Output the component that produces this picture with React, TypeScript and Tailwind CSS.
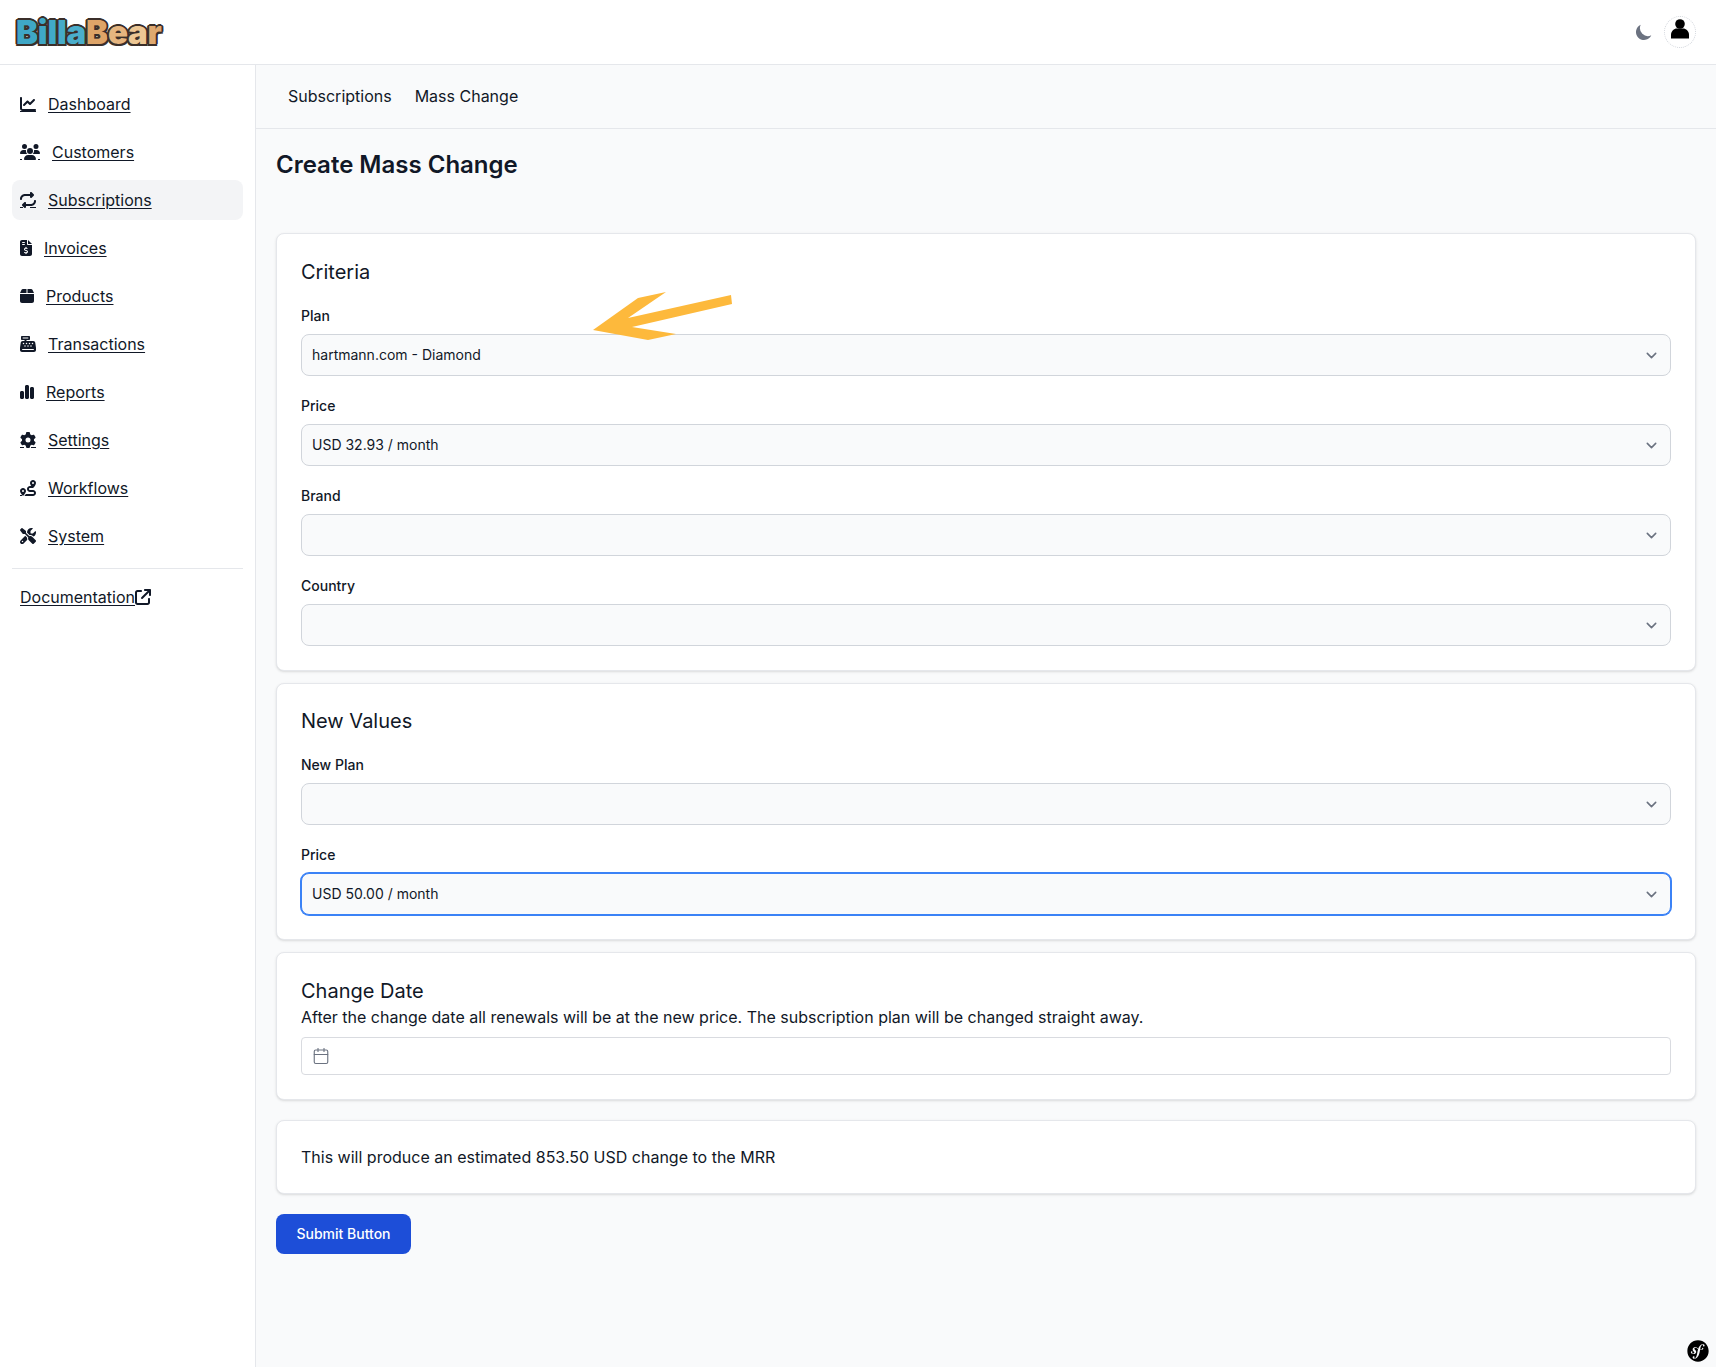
import React from 'react'
import { Calendar } from 'lucide-react'
import {
    FaArrowUpRightFromSquare,
    FaBox,
    FaCashRegister,
    FaChartLine,
    FaChartSimple,
    FaFileInvoiceDollar,
    FaGear,
    FaRepeat,
    FaRoute,
    FaScrewdriverWrench,
    FaSymfony,
    FaUsers,
} from 'react-icons/fa6'
import { HiMoon } from 'react-icons/hi'

// the line classes copy what the link underline leaves visible around each icon
const navItems = [
    { label: 'Dashboard', icon: FaChartLine, size: 'w-4', line: 'bg-[#111827]' },
    {
        label: 'Customers',
        icon: FaUsers,
        size: 'w-5',
        line: 'bg-[linear-gradient(90deg,#111827_0_2px,transparent_2px_18px,#111827_18px_20px)]',
    },
    {
        label: 'Subscriptions',
        icon: FaRepeat,
        size: 'w-4',
        active: true,
        line: 'bg-[linear-gradient(90deg,#111827_0_3px,transparent_3px_10px,#111827_10px_16px)]',
    },
    { label: 'Invoices', icon: FaFileInvoiceDollar, size: 'w-3' },
    { label: 'Products', icon: FaBox, size: 'w-3.5' },
    { label: 'Transactions', icon: FaCashRegister, size: 'w-4' },
    { label: 'Reports', icon: FaChartSimple, size: 'w-3.5' },
    {
        label: 'Settings',
        icon: FaGear,
        size: 'w-4',
        line: 'bg-[linear-gradient(90deg,#111827_0_4px,transparent_4px_11px,#111827_11px_16px)]',
    },
    {
        label: 'Workflows',
        icon: FaRoute,
        size: 'w-4',
        line: 'bg-[linear-gradient(90deg,#111827_0_2px,transparent_2px_16px)]',
    },
    { label: 'System', icon: FaScrewdriverWrench, size: 'w-4' },
]

function Logo() {
    const letters = [
        ['B', 'text-[#3fa7c6]'],
        ['i', 'text-[#3fa7c6]'],
        ['l', 'text-[#41a9c8]'],
        ['l', 'text-[#46abc8]'],
        ['a', 'text-[#4aaecb]'],
        ['B', 'text-[#dea468]'],
        ['e', 'text-[#e6b57f]'],
        ['a', 'text-[#edc794]'],
        ['r', 'text-[#dfa970]'],
    ]
    return (
        <div className="ml-[16px] font-['Inter'] text-[33px] leading-none font-black tracking-[-0.2px] [text-shadow:2px_0_0_#3b2f2a,-2px_0_0_#3b2f2a,0_2px_0_#3b2f2a,0_-2px_0_#3b2f2a,1.5px_1.5px_0_#3b2f2a,-1.5px_1.5px_0_#3b2f2a,1.5px_-1.5px_0_#3b2f2a,-1.5px_-1.5px_0_#3b2f2a]">
            {letters.map(([ch, color], i) => (
                <span key={i} className={color}>{ch}</span>
            ))}
        </div>
    )
}

function SelectField({ label, value, focused }: { label: string; value?: string; focused?: boolean }) {
    return (
        <div className="mt-5">
            <label className="block mb-2 text-sm font-medium text-[#111827]">{label}</label>
            <div className="relative">
                <select
                    defaultValue={value ?? ''}
                    className={`block w-full h-[42px] appearance-none rounded-lg border bg-[#f9fafb] p-2.5 pr-10 text-sm text-[#111827] outline-none ${
                        focused ? 'border-[#3b82f6] ring-1 ring-[#3b82f6]' : 'border-[#d1d5db]'
                    }`}
                >
                    <option value={value ?? ''}>{value ?? ''}</option>
                </select>
                <svg viewBox="0 0 20 20" fill="none" className="absolute right-[9px] top-[10.5px] w-[21px] h-[21px] pointer-events-none">
                    <path d="m6 8 4 4 4-4" stroke="#6B7280" strokeWidth="1.5" strokeLinecap="round" strokeLinejoin="round" />
                </svg>
            </div>
        </div>
    )
}

function Card({ className, children }: { className?: string; children: React.ReactNode }) {
    return <div className={`rounded-lg border border-[#e5e7eb] bg-white p-6 shadow-sm ${className ?? ''}`}>{children}</div>
}

export default function App() {
    return (
        <div className="relative flex flex-col h-screen overflow-hidden bg-[#f9fafb] font-['Inter',sans-serif] text-[#111827]">
            <header className="flex items-center justify-between h-[65px] shrink-0 border-b border-[#e5e7eb] bg-white">
                <Logo />
                <div className="flex items-center gap-[10px] mr-5">
                    <HiMoon className="w-5 h-5 text-[#6b7280]" />
                    <div className="flex items-center justify-center w-8 h-8 rounded-full border border-dotted border-[#d1d5db]">
                        <svg viewBox="0 0 20 20" className="w-5 h-5 shrink-0 -translate-y-[3px]">
                            <circle cx="10" cy="5" r="4.8" fill="#000" />
                            <path d="M1 19.5V16c0-4 3-6.5 6-6.5h6c3 0 6 2.5 6 6.5v3.5z" fill="#000" />
                        </svg>
                    </div>
                </div>
            </header>

            <div className="flex flex-1 min-h-0">
                <aside className="w-64 shrink-0 border-r border-[#e5e7eb] bg-white px-3 pt-[19px]">
                    <ul className="space-y-2">
                        {navItems.map(({ label, icon: Icon, size, line, active }) => (
                            <li key={label}>
                                <a
                                    href="#"
                                    className={`flex items-center h-10 px-2 rounded-lg ${active ? 'bg-[#f3f4f6]' : ''}`}
                                >
                                    <span className={`relative h-4 ${size}`}>
                                        <Icon className="w-full h-4" />
                                        {line && <span className={`absolute inset-x-0 bottom-0 h-px ${line}`} />}
                                    </span>
                                    <span className="ml-3 underline underline-offset-[2px]">{label}</span>
                                </a>
                            </li>
                        ))}
                    </ul>
                    <div className="mt-3 border-t border-[#e5e7eb] pt-2">
                        <a href="#" className="flex items-center h-10 px-2">
                            <span className="underline underline-offset-[2px]">Documentation</span>
                            <FaArrowUpRightFromSquare className="w-4 h-4" />
                        </a>
                    </div>
                </aside>

                <main className="flex-1 min-w-0">
                    <nav className="flex items-center gap-[23px] h-16 pl-8 pb-[1px] border-b border-[#e5e7eb]">
                        <a href="#">Subscriptions</a>
                        <a href="#">Mass Change</a>
                    </nav>
                    <div className="px-5 pt-5">
                        <h1 className="text-2xl font-semibold leading-8">Create Mass Change</h1>

                        <Card className="mt-[52px]">
                            <h2 className="text-xl leading-7">Criteria</h2>
                            <SelectField label="Plan" value="hartmann.com - Diamond" />
                            <SelectField label="Price" value="USD 32.93 / month" />
                            <SelectField label="Brand" />
                            <SelectField label="Country" />
                        </Card>

                        <Card className="mt-3">
                            <h2 className="text-xl leading-[27px]">New Values</h2>
                            <SelectField label="New Plan" />
                            <SelectField label="Price" value="USD 50.00 / month" focused />
                        </Card>

                        <Card className="mt-3">
                            <h2 className="text-xl leading-7">Change Date</h2>
                            <p className="leading-6">After the change date all renewals will be at the new price. The subscription plan will be changed straight away.</p>
                            <div className="flex items-center h-[38px] mt-2 px-[10px] rounded border border-[#d9dbe0] bg-white">
                                <Calendar className="w-[18px] h-[18px] text-[#6b7280]" strokeWidth={1.5} />
                            </div>
                        </Card>

                        <Card className="mt-5">
                            <p className="leading-6">This will produce an estimated 853.50 USD change to the MRR</p>
                        </Card>

                        <button className="mt-5 h-10 w-[135px] rounded-lg bg-[#1d4ed8] text-sm font-medium text-white">Submit Button</button>
                    </div>
                </main>
            </div>

            <svg viewBox="0 0 140 48" className="absolute left-[593px] top-[292px] w-[140px] h-[48px]">
                <polygon points="0,38 45,6 73,0 35,26 138,3 139,12 39,35 83,42 55,48" fill="#fdb93c" />
            </svg>

            <FaSymfony className="absolute right-[7px] bottom-[5px] w-[22px] h-[22px] text-black" />
        </div>
    )
}
